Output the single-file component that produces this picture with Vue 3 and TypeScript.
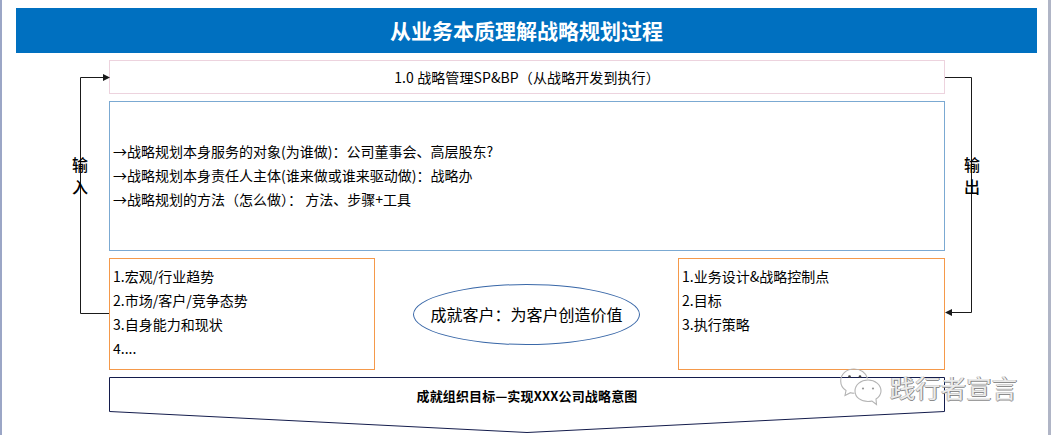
<script setup lang="ts">
const midLines: string[] = [
  '→战略规划本身服务的对象(为谁做)：公司董事会、高层股东?',
  '→战略规划本身责任人主体(谁来做或谁来驱动做)：战略办',
  '→战略规划的方法（怎么做）： 方法、步骤+工具',
]
const inputs: string[] = ['1.宏观/行业趋势', '2.市场/客户/竞争态势', '3.自身能力和现状', '4....']
const outputs: string[] = ['1.业务设计&战略控制点', '2.目标', '3.执行策略']
</script>

<template>
  <div class="slide">
    <header class="banner">从业务本质理解战略规划过程</header>
    <main class="diagram">
      <div class="box pink">1.0 战略管理SP&amp;BP（从战略开发到执行）</div>
      <div class="box blue">
        <p v-for="l in midLines" :key="l">{{ l }}</p>
      </div>
      <div class="row">
        <div class="box orange">
          <p v-for="l in inputs" :key="l">{{ l }}</p>
        </div>
        <div class="ellipse-wrap">
          <div class="ellipse">成就客户：为客户创造价值</div>
        </div>
        <div class="box orange">
          <p v-for="l in outputs" :key="l">{{ l }}</p>
        </div>
      </div>
      <div class="goal">
        <svg class="goal-shape" width="838" height="57" viewBox="0 0 838 57">
          <path d="M0.5 0.5H835.5V34.5L418 55.5L0.5 34.5Z" fill="#fff" stroke="#141c4c" />
        </svg>
        <span class="goal-text">成就组织目标—实现XXX公司战略意图</span>
      </div>
    </main>

    <svg class="connectors" width="1052" height="435" viewBox="0 0 1052 435">
      <path d="M109 313.500H80.500V77.500H104" fill="none" stroke="#1a1a1a" />
      <path d="M110 77.500L103 74V81Z" fill="#1a1a1a" />
      <path d="M945 77.500H971.500V312.500H950" fill="none" stroke="#1a1a1a" />
      <path d="M945 312.500L952 309V316Z" fill="#1a1a1a" />
    </svg>
    <div class="side side-in">输<br />入</div>
    <div class="side side-out">输<br />出</div>

    <div class="watermark">
      <svg width="42" height="38" viewBox="0 0 42 38" fill="none" stroke="#b4b4b4" stroke-width="1.100">
        <path d="M14 1C6.500 1 0.700 6 0.700 13C0.700 17 2.800 20.500 6 22.500L5 27.500L10.500 24.700C11.500 25 12.800 25.200 14.500 25.300" />
        <path d="M14 1C20.500 1 26 4.500 27.500 10.500" />
        <path d="M28 12C21 12 15 16.500 15 23C15 29.500 21 33.500 28 33.500C29.500 33.500 31 33.300 32 33L36.500 36.500L36 31C39 29 41 26.500 41 23C41 16.500 35 12 28 12Z" />
        <circle cx="9.500" cy="8.500" r="1.300" fill="#444" stroke="none" />
        <circle cx="20" cy="8.500" r="1.300" fill="#444" stroke="none" />
        <circle cx="23" cy="20.500" r="1.100" fill="#999" stroke="none" />
        <circle cx="33" cy="20.500" r="1.100" fill="#999" stroke="none" />
      </svg>
      <span class="wm-text">践行者宣言</span>
    </div>
  </div>
</template>

<style>
html, body { margin: 0; background: #fff; }
</style>

<style scoped>
.slide {
  position: relative;
  box-sizing: border-box;
  width: 1051px;
  height: 435px;
  overflow: hidden;
  background: #fff;
  padding-top: 8px;
  font-family: "Noto Sans CJK SC", "Noto Sans", sans-serif;
  color: #000;
  border-left: 2px solid #9ba6c6;
  border-right: 3px solid #b0b5c6;
}
.banner {
  margin: 0 11px 0 14px;
  height: 45px;
  line-height: 45px;
  background: #0070c0;
  color: #fff;
  font-size: 21px;
  font-weight: 700;
  text-align: center;
}
.diagram {
  margin: 7px 0 0 107px;
  width: 836px;
  display: flex;
  flex-direction: column;
  gap: 7px;
}
.box {
  box-sizing: border-box;
  background: #fff;
  font-size: 14px;
}
.box p { margin: 0; line-height: 24px; white-space: pre; }
.pink {
  height: 34px;
  line-height: 32px;
  border: 1px solid #edd3de;
  text-align: center;
  letter-spacing: 0.100px;
}
.blue {
  height: 150px;
  border: 1px solid #7ba9d2;
  padding: 0 3px 3px;
  display: flex;
  flex-direction: column;
  justify-content: center;
}
.row {
  display: grid;
  grid-template-columns: 266px 1fr 267px;
  height: 112px;
}
.orange {
  border: 1px solid #f5994a;
  padding: 5px 3px;
}
.ellipse-wrap {
  display: flex;
  align-items: center;
  justify-content: center;
}
.ellipse {
  box-sizing: border-box;
  width: 227px;
  height: 61px;
  border: 1px solid #3a68a8;
  border-radius: 50%;
  font-size: 16px;
  line-height: 58px;
  text-align: center;
  white-space: nowrap;
}
.goal {
  position: relative;
  height: 57px;
}
.goal-shape { display: block; }
.goal-text {
  position: absolute;
  left: 0;
  right: 0;
  top: 10px;
  text-align: center;
  font-size: 13px;
  line-height: 18px;
  font-weight: 700;
  letter-spacing: 0.150px;
}
.connectors {
  position: absolute;
  left: -2px;
  top: 0;
  pointer-events: none;
}
.side {
  position: absolute;
  width: 20px;
  font-size: 16px;
  line-height: 22px;
  font-weight: 500;
  text-align: center;
}
.side-in { left: 68px; top: 153px; }
.side-out { left: 960px; top: 153px; }
.watermark {
  position: absolute;
  left: 838px;
  top: 368px;
  display: flex;
  align-items: center;
  gap: 8px;
}
.wm-text {
  font-size: 25px;
  line-height: 36px;
  letter-spacing: 0.500px;
  color: #ececec;
  text-shadow: 1px 0 0 #808080, 0 1px 0 #8c8c8c, -1px 0 0 #c0c0c0;
}
</style>
